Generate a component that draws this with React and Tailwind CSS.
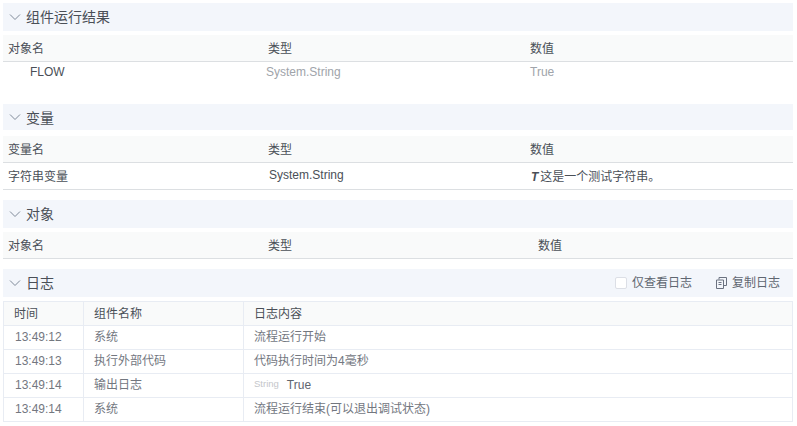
import React from 'react'

const font = { fontFamily: '"Liberation Sans", "Noto Sans CJK SC", sans-serif' }

function Chevron() {
  return (
    <svg width="12" height="12" viewBox="0 0 12 12" fill="none" stroke="#7f8a99" strokeWidth="1" className="shrink-0">
      <path d="M1 3.5 L6 8.5 L11 3.5" />
    </svg>
  )
}

function SectionHeader({ title, children, className, titleClass = '' }) {
  return (
    <div className={`flex items-center bg-[#f3f6fb] pl-[6px] pr-[13px] ${className}`}>
      <Chevron />
      <span className={`ml-[5px] text-[14px] text-[#4a4f57] ${titleClass}`}>{title}</span>
      {children}
    </div>
  )
}

function HeadRow({ first, valuePad = 'pl-0', className = 'mt-[4px]' }) {
  return (
    <div className={`flex h-[27px] items-center border-b border-[#dcdfe2] bg-[#f9fafa] pt-[2px] text-[12px] text-[#4a4f57] ${className}`}>
      <div className="w-[265px] pl-[5px]">{first}</div>
      <div className="w-[262px]">类型</div>
      <div className={valuePad}>数值</div>
    </div>
  )
}

const logs = [
  ['13:49:12', '系统', '流程运行开始'],
  ['13:49:13', '执行外部代码', '代码执行时间为4毫秒'],
  ['13:49:14', '输出日志', null],
  ['13:49:14', '系统', '流程运行结束(可以退出调试状态)'],
]

export default function App() {
  return (
    <div style={font} className="h-[426px] w-[797px] overflow-hidden bg-white pl-[3px] pr-[4px] pt-[3px]">
      <SectionHeader title="组件运行结果" className="h-[28px]" />
      <HeadRow first="对象名" />
      <div className="flex h-[20px] items-center text-[12px] text-[#a0a4aa]">
        <div className="w-[263px] pl-[27px] text-[#4a4f57]">FLOW</div>
        <div className="w-[264px]">System.String</div>
        <div>True</div>
      </div>

      <SectionHeader title="变量" className="mt-[22px] h-[26px]" titleClass="pt-[2px]" />
      <HeadRow first="变量名" className="mt-[6px]" />
      <div className="flex h-[27px] items-center border-b border-[#dcdfe2] pt-[2px] text-[12px] text-[#4a4f57]">
        <div className="w-[265px] pl-[5px]">字符串变量</div>
        <div className="w-[262px] -translate-y-[2px] pl-[1px]">System.String</div>
        <div className="flex items-center pl-[1px]">
          <span className="mr-[2px] font-bold italic">T</span>这是一个测试字符串。
        </div>
      </div>

      <SectionHeader title="对象" className="mt-[10px] h-[28px]" />
      <HeadRow first="对象名" valuePad="pl-[8px]" />

      <SectionHeader title="日志" className="mt-[10px] h-[28px]">
        <div className="ml-auto flex items-center text-[12px] text-[#5f6670]">
          <span className="h-[12px] w-[12px] rounded-[2px] border border-[#dcdfe6] bg-white" />
          <span className="ml-[5px]">仅查看日志</span>
          <svg width="12" height="12" viewBox="0 0 12 12" fill="none" stroke="#6b7280" strokeWidth="1" className="ml-[23px]">
            <path d="M4 2.5 V0.5 H11.5 V8.5 H9" />
            <path d="M1.5 3 H8.5 V11.5 H1.5 Z" />
            <path d="M3.5 5.5 H6.5 M3.5 7.5 H6.5" />
          </svg>
          <span className="ml-[5px]">复制日志</span>
        </div>
      </SectionHeader>

      <div className="mt-[4px] border border-[#e8ecf3] text-[12px]">
        <div className="flex h-[23px] items-center bg-[#f9fafa] text-[#4a4f57]">
          <div className="flex h-full w-[80px] items-center border-r border-[#e8ecf3] pl-[10px]">时间</div>
          <div className="flex h-full w-[160px] items-center border-r border-[#e8ecf3] pl-[10px]">组件名称</div>
          <div className="pl-[10px]">日志内容</div>
        </div>
        {logs.map((row, i) => (
          <div key={i} className="flex h-[24px] items-center border-t border-[#e8ecf3] text-[#73777f]">
            <div className="flex h-full w-[80px] items-center border-r border-[#e8ecf3] pb-[2px] pl-[11px]">{row[0]}</div>
            <div className="flex h-full w-[160px] items-center border-r border-[#e8ecf3] pb-[2px] pl-[10px]">{row[1]}</div>
            <div className="flex items-center pb-[2px] pl-[10px]">
              {row[2] ?? (
                <>
                  <span className="text-[9.5px] text-[#c4c6ca]">String</span>
                  <span className="ml-[8px] text-[#5f6670]">True</span>
                </>
              )}
            </div>
          </div>
        ))}
      </div>
    </div>
  )
}
